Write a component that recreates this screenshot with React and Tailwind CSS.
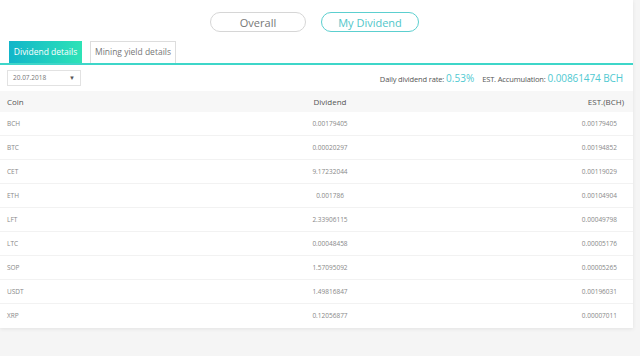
const rows = [
    ['BCH', '0.00179405', '0.00179405'],
    ['BTC', '0.00020297', '0.00194852'],
    ['CET', '9.17232044', '0.00119029'],
    ['ETH', '0.001786', '0.00104904'],
    ['LFT', '2.33906115', '0.00049798'],
    ['LTC', '0.00048458', '0.00005176'],
    ['SOP', '1.57095092', '0.00005265'],
    ['USDT', '1.49816847', '0.00196031'],
    ['XRP', '0.12056877', '0.00007011'],
];

export default function App() {
    return (
        <div className="w-[640px] h-[356px] bg-[#f5f5f5] overflow-hidden" style={{ fontFamily: '"Open Sans", "Noto Sans", sans-serif' }}>
            <div className="w-[633px] bg-white shadow-[0_1px_4px_rgba(0,0,0,0.08)]">
                {/* toggle */}
                <div className="flex justify-center gap-[15px] pt-[12px] pr-[4px]">
                    <button className="w-[96px] h-[20px] rounded-full border border-[#d6d6d6] text-[11px] leading-none text-[#777]">Overall</button>
                    <button className="w-[98px] h-[20px] rounded-full border border-[#5ccfcf] text-[11px] leading-none text-[#4fc6c9]">My Dividend</button>
                </div>

                {/* tabs */}
                <div className="flex items-end gap-[8px] pl-[9px] mt-[9px] border-b-2 border-[#3ed6c9]">
                    <div className="w-[73px] h-[22px] flex items-center justify-center text-[8.5px] text-white bg-gradient-to-r from-[#12b5c9] to-[#2ee3b6]">Dividend details</div>
                    <div className="w-[86px] h-[22px] flex items-center justify-center text-[8.5px] text-[#777] border border-[#ddd] border-b-0">Mining yield details</div>
                </div>

                {/* controls */}
                <div className="flex items-center justify-between h-[26px] pl-[7px] pr-[10px]">
                    <div className="w-[74px] h-[16px] border border-[#e2e2e2] flex items-center justify-between px-[5px]">
                        <span className="text-[6.5px] text-[#777]">20.07.2018</span>
                        <span className="text-[6px] text-[#555]">▼</span>
                    </div>
                    <div className="flex items-baseline text-[7.5px] text-[#555] tracking-[-0.15px]">
                        <span>Daily dividend rate:</span>
                        <span className="ml-[2px] text-[10px] text-[#4fc9d1] tracking-normal">0.53%</span>
                        <span className="ml-[8px]">EST. Accumulation:</span>
                        <span className="ml-[2px] text-[10px] text-[#4fc9d1] tracking-[-0.1px]">0.00861474 BCH</span>
                    </div>
                </div>

                {/* table */}
                <div className="flex items-center h-[21px] bg-[#f7f7f7] px-[7px] text-[8px] text-[#555]">
                    <div className="w-[283px]">Coin</div>
                    <div className="w-[80px] text-center">Dividend</div>
                    <div className="flex-1 text-right pr-[2px]">EST.(BCH)</div>
                </div>
                {rows.map(([c, d, e], i) => (
                    <div key={c} className={`flex items-center h-[24px] px-[7px] text-[6.5px] text-[#888] ${i < rows.length - 1 ? 'border-b border-[#f2f2f2]' : ''}`}>
                        <div className="w-[283px]">{c}</div>
                        <div className="w-[80px] text-center">{d}</div>
                        <div className="flex-1 text-right pr-[9px]">{e}</div>
                    </div>
                ))}
            </div>
        </div>
    );
}
